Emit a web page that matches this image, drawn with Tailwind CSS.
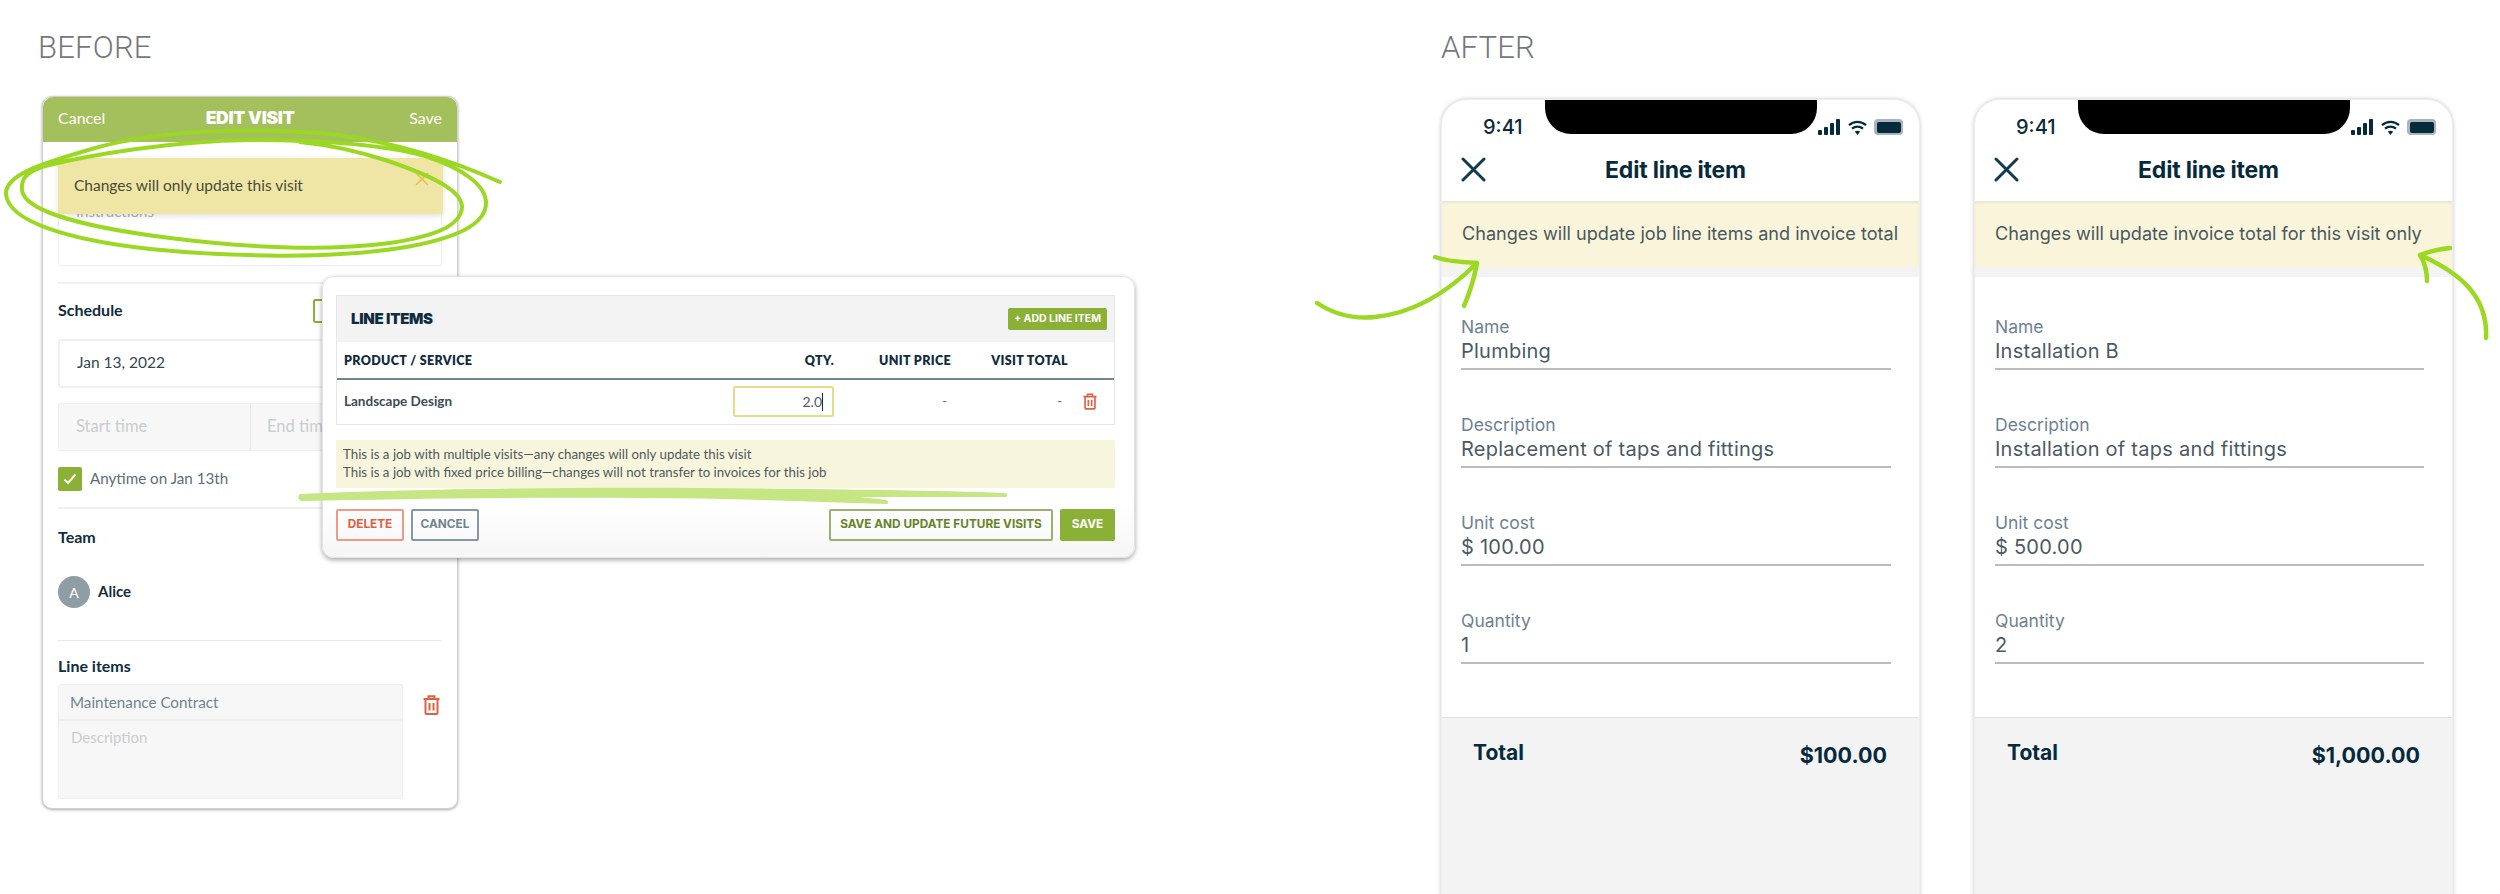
<!DOCTYPE html>
<html lang="en">
<head>
  <meta charset="UTF-8" />
  <meta name="viewport" content="width=device-width, initial-scale=1.0" />
  <title>Before / After</title>
  <script src="https://cdn.jsdelivr.net/npm/@tailwindcss/browser@4"></script>
</head>
<body class="bg-white">
<div class="relative flex w-[2500px] h-[894px] overflow-hidden bg-white font-['Lato',sans-serif]">

  <!-- Before -->
  <section class="relative w-[1441px] shrink-0">
    <h2 class="ml-[38px] mt-[30px] h-[66px] text-[31px] leading-[36px] font-light tracking-[0.2px] text-[#75787b] font-['Roboto',sans-serif]">BEFORE</h2>

    <!-- Edit visit card -->
    <div class="relative ml-[42px] w-[416px] h-[713px] rounded-[10px] bg-white border border-[#d0d0d0] shadow-[0_1px_3px_rgba(0,0,0,0.35)]">
      <div class="flex items-center h-[45px] px-[15px] pb-[3px] rounded-t-[10px] bg-[#a3c05c] text-white text-[16px]">
        <span class="flex-1">Cancel</span>
        <span class="text-[17.5px] font-black font-['Inter',sans-serif] tracking-[-0.3px]">EDIT VISIT</span>
        <span class="flex-1 text-right">Save</span>
      </div>
      <div class="px-[15px]">
        <div class="mt-[17px] h-[107px] pt-[40px] pl-[17px] border border-[#eeeeee] rounded-[2px] text-[15px] text-[#a9b1b6]">Instructions</div>
        <div class="mt-[16px] h-[2px] bg-[#f0f0f0]"></div>

        <div class="mt-[15px] flex items-center justify-between h-[24px]">
          <span class="pb-[2px] text-[16px] font-bold text-[#0f2d3e]">Schedule</span>
          <span class="w-[129px] h-[24px] rounded-[2px] border-2 border-[#8ab036]"></span>
        </div>
        <div class="mt-[16px] flex items-center h-[49px] pl-[17px] pb-[2px] border-2 border-[#f0f0f0] rounded-[3px] text-[15.5px] text-[#33484f]">Jan 13, 2022</div>
        <div class="mt-[15px] flex h-[48px] bg-[#f7f7f7] border border-[#eeeeee] rounded-[2px] text-[16.5px] text-[#c9cdd0]">
          <div class="flex items-center w-[192px] pl-[17px] pb-[2px] border-r border-[#e8e8e8]">Start time</div>
          <div class="flex items-center pl-[16px] pb-[2px]">End time</div>
        </div>
        <div class="mt-[16px] flex items-center gap-[8px] h-[24px]">
          <span class="flex items-center justify-center w-[24px] h-[24px] rounded-[2px] bg-[#8ab036]">
            <svg width="14" height="12" viewBox="0 0 14 12" fill="none" stroke="#fff" stroke-width="2"><path d="M1.5 6.5 5 10l7.5-8.5" /></svg>
          </span>
          <span class="pb-[2px] text-[15.2px] text-[#5d6d77]">Anytime on Jan 13th</span>
        </div>
        <div class="mt-[16px] h-[2px] bg-[#f0f0f0]"></div>

        <div class="mt-[17px] h-[24px] text-[16px] leading-[21px] font-bold text-[#0f2d3e]">Team</div>
        <div class="mt-[26px] flex items-center gap-[8px]">
          <span class="flex items-center justify-center w-[32px] h-[32px] rounded-full bg-[#8f9da5] text-white text-[14px]">A</span>
          <span class="pb-[2px] text-[15px] font-bold text-[#0f2d3e]">Alice</span>
        </div>
        <div class="mt-[32px] h-[1px] bg-[#e8e8e8]"></div>

        <div class="mt-[14px] h-[24px] text-[16px] leading-[21px] font-bold text-[#0f2d3e]">Line items</div>
        <div class="mt-[5px] flex">
          <div class="w-[345px] h-[115px] bg-[#f7f7f7] border border-[#f0f0f0] rounded-[2px]">
            <div class="flex items-center h-[36px] pl-[11px] border-b-2 border-[#f0f0f0] text-[15.2px] text-[#6f8590]">Maintenance Contract</div>
            <div class="pl-[12px] pt-[5px] text-[15px] text-[#c9cdd0]">Description</div>
          </div>
          <svg class="ml-[20px] mt-[11px]" width="17" height="20" viewBox="0 0 17 20" fill="none" stroke="#e2603f" stroke-width="2">
            <path d="M0.5 4h16M5.5 4V1.2h6V4M2.5 4v14a1 1 0 0 0 1 1h10a1 1 0 0 0 1-1V4M6.5 8v7.5M10.5 8v7.5" />
          </svg>
        </div>
      </div>

      <!-- Toast over the instructions field -->
      <div class="absolute left-[15px] top-[61px] flex items-center w-[385px] h-[56px] pl-[16px] bg-[#efe6a6] shadow-[0_2px_6px_rgba(0,0,0,0.12)] text-[15.5px] text-[#4a4a38]">
        Changes will only update this visit
        <svg class="absolute right-[14px] top-[14px]" width="14" height="14" viewBox="0 0 14 14" stroke="#e3c24a" stroke-width="1.5"><path d="M1 1l12 12M13 1 1 13" /></svg>
      </div>
    </div>

    <!-- Line items dialog -->
    <div class="absolute left-[322px] top-[276px] w-[813px] h-[282px] pl-[13px] pr-[19px] pt-[18px] rounded-[12px] border border-[#e4e4e4] bg-gradient-to-b from-white from-80% to-[#f6f6f6] shadow-[0_2px_5px_rgba(0,0,0,0.35)] z-10">
      <div class="w-[779px] h-[130px] border border-[#e6e6e6]">
        <div class="flex items-center justify-between h-[46px] pl-[14px] pr-[7px] bg-[#f3f3f3]">
          <span class="text-[15px] font-black font-['Inter',sans-serif] tracking-[-0.3px] text-[#0f2d3e]">LINE ITEMS</span>
          <span class="flex items-center justify-center w-[99px] h-[22px] rounded-[2px] bg-[#8ab036] text-white text-[10.5px] font-bold font-['Inter',sans-serif]">+ ADD LINE ITEM</span>
        </div>
        <div class="flex items-center h-[38px] pl-[7px] pt-[2px] border-b-2 border-[#6f8590] text-[12.5px] font-extrabold tracking-[0.35px] text-[#0f2d3e]">
          <span class="w-[490px]">PRODUCT / SERVICE</span>
          <span class="w-[0px] flex justify-end whitespace-nowrap">QTY.</span>
          <span class="w-[117px] text-right">UNIT PRICE</span>
          <span class="w-[117px] text-right">VISIT TOTAL</span>
        </div>
        <div class="flex items-center h-[44px] pl-[7px] pb-[1px] text-[#5d6d77]">
          <span class="w-[389px] text-[13.5px] font-bold text-[#3d4c56]">Landscape Design</span>
          <span class="relative flex items-center justify-end w-[101px] h-[31px] pr-[10px] border-2 border-[#e8dc8a] rounded-[2px] text-[14px] text-[#4a5a64]">2.0<span class="absolute right-[9px] top-[5px] w-[1px] h-[18px] bg-[#0f2d3e]"></span></span>
          <span class="w-[113px] text-right text-[13px]">-</span>
          <span class="w-[115px] text-right text-[13px]">-</span>
          <svg class="ml-[21px]" width="14" height="17" viewBox="0 0 17 20" fill="none" stroke="#e2603f" stroke-width="2">
            <path d="M0.5 4h16M5.5 4V1.2h6V4M2.5 4v14a1 1 0 0 0 1 1h10a1 1 0 0 0 1-1V4M6.5 8v7.5M10.5 8v7.5" />
          </svg>
        </div>
      </div>
      <div class="mt-[15px] w-[779px] h-[48px] px-[7px] py-[6px] bg-[#f7f5dc] text-[13.3px] leading-[17.5px] text-[#4e5a60]">
        <p>This is a job with multiple visits—any changes will only update this visit</p>
        <p>This is a job with fixed price billing—changes will not transfer to invoices for this job</p>
      </div>
      <div class="mt-[21px] flex w-[779px] h-[32px] text-[11.8px] font-bold font-['Inter',sans-serif]">
        <span class="flex items-center justify-center w-[68px] border-2 border-[#ee9a86] rounded-[2px] text-[#e2603f]">DELETE</span>
        <span class="ml-[7px] flex items-center justify-center w-[68px] border-2 border-[#8598a5] rounded-[2px] text-[#6f8590]">CANCEL</span>
        <span class="ml-auto flex items-center justify-center w-[224px] border-2 border-[#9ab070] rounded-[2px] text-[#66832a]">SAVE AND UPDATE FUTURE VISITS</span>
        <span class="ml-[7px] flex items-center justify-center w-[55px] rounded-[2px] bg-[#8ab036] text-white">SAVE</span>
      </div>
    </div>
  </section>

  <!-- After -->
  <section class="font-['Inter',sans-serif]">
    <h2 class="mt-[30px] h-[69px] text-[31px] leading-[36px] font-light tracking-[0.2px] text-[#75787b] font-['Roboto',sans-serif]">AFTER</h2>
    <div class="flex gap-[54px]">

      <!-- Phone 1 -->
      <div class="relative flex flex-col w-[479px] h-[800px] rounded-t-[26px] border-x border-t border-[#eeeeee] bg-white shadow-[0_0_4px_rgba(0,0,0,0.22)]">
        <div class="absolute left-[103px] top-0 w-[272px] h-[34px] rounded-b-[26px] bg-black"></div>
        <div class="flex items-center h-[54px] pl-[41px] pr-[16px]">
          <span class="text-[20px] font-medium text-[#0c2a3a]">9:41</span>
          <div class="ml-auto flex items-center gap-[7px]">
            <svg width="23" height="16" viewBox="0 0 23 16" fill="#042a3c"><rect x="0" y="11" width="4" height="5" rx="1" /><rect x="6" y="8" width="4" height="8" rx="1" /><rect x="12" y="4" width="4" height="12" rx="1" /><rect x="18" y="0" width="4" height="16" rx="1" /></svg>
            <svg width="19" height="15" viewBox="0 0 19 15" fill="none" stroke="#042a3c" stroke-width="2.2"><path d="M1 5.2c5-4.4 12-4.4 17 0M4 8.6c3.2-2.7 7.8-2.7 11 0" /><path d="M9.5 15 6.8 11.6c1.6-1.2 3.8-1.2 5.4 0z" fill="#042a3c" stroke="none" /></svg>
            <span class="flex items-center justify-center w-[29px] h-[16px] rounded-[4px] bg-[#a9b5bb]"><span class="w-[24px] h-[11px] rounded-[2px] bg-[#042a3c]"></span></span>
          </div>
        </div>
        <div class="relative flex items-center justify-center h-[47px] pb-[14px] pr-[10px]">
          <svg class="absolute left-[19px] top-[3px]" width="25" height="25" viewBox="0 0 25 25" stroke="#0f3a4f" stroke-width="3" stroke-linecap="round"><path d="M2 2l21 21M23 2 2 23" /></svg>
          <span class="text-[23px] font-bold text-[#042a3c] tracking-[-0.2px]">Edit line item</span>
        </div>
        <div class="flex items-center h-[66px] pl-[20px] bg-[#faf5da] shadow-[inset_0_2px_2px_rgba(0,0,0,0.06)] text-[18.1px] text-[#48585f]">Changes will update job line items and invoice total</div>
        <div class="h-[10px] bg-[#f3f3f3]"></div>
        <div class="pl-[19px] pr-[28px] pt-[38px] h-[440px]">
          <div class="h-[55px] pt-[1px] border-b-2 border-[#bcbcbc]">
            <p class="text-[17.5px] leading-[22px] text-[#6d8290]">Name</p>
            <p class="text-[20px] leading-[26px] tracking-[0.25px] text-[#4a5a64]">Plumbing</p>
          </div>
          <div class="mt-[43px] h-[55px] pt-[1px] border-b-2 border-[#bcbcbc]">
            <p class="text-[17.5px] leading-[22px] text-[#6d8290]">Description</p>
            <p class="text-[20px] leading-[26px] tracking-[0.25px] text-[#4a5a64]">Replacement of taps and fittings</p>
          </div>
          <div class="mt-[43px] h-[55px] pt-[1px] border-b-2 border-[#bcbcbc]">
            <p class="text-[17.5px] leading-[22px] text-[#6d8290]">Unit cost</p>
            <p class="text-[20px] leading-[26px] tracking-[0.25px] text-[#4a5a64]">$ 100.00</p>
          </div>
          <div class="mt-[43px] h-[55px] pt-[1px] border-b-2 border-[#bcbcbc]">
            <p class="text-[17.5px] leading-[22px] text-[#6d8290]">Quantity</p>
            <p class="text-[20px] leading-[26px] tracking-[0.25px] text-[#4a5a64]">1</p>
          </div>
        </div>
        <div class="flex-1 flex justify-between pl-[31px] pr-[32px] pt-[22px] bg-[#f3f3f3] border-t border-[#e0e0e0] text-[#042a3c] font-bold">
          <span class="text-[21px] leading-[26px]">Total</span>
          <span class="text-[21.5px] leading-[30px]">$100.00</span>
        </div>
      </div>

      <!-- Phone 2 -->
      <div class="relative flex flex-col w-[479px] h-[800px] rounded-t-[26px] border-x border-t border-[#eeeeee] bg-white shadow-[0_0_4px_rgba(0,0,0,0.22)]">
        <div class="absolute left-[103px] top-0 w-[272px] h-[34px] rounded-b-[26px] bg-black"></div>
        <div class="flex items-center h-[54px] pl-[41px] pr-[16px]">
          <span class="text-[20px] font-medium text-[#0c2a3a]">9:41</span>
          <div class="ml-auto flex items-center gap-[7px]">
            <svg width="23" height="16" viewBox="0 0 23 16" fill="#042a3c"><rect x="0" y="11" width="4" height="5" rx="1" /><rect x="6" y="8" width="4" height="8" rx="1" /><rect x="12" y="4" width="4" height="12" rx="1" /><rect x="18" y="0" width="4" height="16" rx="1" /></svg>
            <svg width="19" height="15" viewBox="0 0 19 15" fill="none" stroke="#042a3c" stroke-width="2.2"><path d="M1 5.2c5-4.4 12-4.4 17 0M4 8.6c3.2-2.7 7.8-2.7 11 0" /><path d="M9.5 15 6.8 11.6c1.6-1.2 3.8-1.2 5.4 0z" fill="#042a3c" stroke="none" /></svg>
            <span class="flex items-center justify-center w-[29px] h-[16px] rounded-[4px] bg-[#a9b5bb]"><span class="w-[24px] h-[11px] rounded-[2px] bg-[#042a3c]"></span></span>
          </div>
        </div>
        <div class="relative flex items-center justify-center h-[47px] pb-[14px] pr-[10px]">
          <svg class="absolute left-[19px] top-[3px]" width="25" height="25" viewBox="0 0 25 25" stroke="#0f3a4f" stroke-width="3" stroke-linecap="round"><path d="M2 2l21 21M23 2 2 23" /></svg>
          <span class="text-[23px] font-bold text-[#042a3c] tracking-[-0.2px]">Edit line item</span>
        </div>
        <div class="flex items-center h-[66px] pl-[20px] bg-[#faf5da] shadow-[inset_0_2px_2px_rgba(0,0,0,0.06)] text-[18.1px] text-[#48585f]">Changes will update invoice total for this visit only</div>
        <div class="h-[10px] bg-[#f3f3f3]"></div>
        <div class="pl-[20px] pr-[28px] pt-[38px] h-[440px]">
          <div class="h-[55px] pt-[1px] border-b-2 border-[#bcbcbc]">
            <p class="text-[17.5px] leading-[22px] text-[#6d8290]">Name</p>
            <p class="text-[20px] leading-[26px] tracking-[0.25px] text-[#4a5a64]">Installation B</p>
          </div>
          <div class="mt-[43px] h-[55px] pt-[1px] border-b-2 border-[#bcbcbc]">
            <p class="text-[17.5px] leading-[22px] text-[#6d8290]">Description</p>
            <p class="text-[20px] leading-[26px] tracking-[0.25px] text-[#4a5a64]">Installation of taps and fittings</p>
          </div>
          <div class="mt-[43px] h-[55px] pt-[1px] border-b-2 border-[#bcbcbc]">
            <p class="text-[17.5px] leading-[22px] text-[#6d8290]">Unit cost</p>
            <p class="text-[20px] leading-[26px] tracking-[0.25px] text-[#4a5a64]">$ 500.00</p>
          </div>
          <div class="mt-[43px] h-[55px] pt-[1px] border-b-2 border-[#bcbcbc]">
            <p class="text-[17.5px] leading-[22px] text-[#6d8290]">Quantity</p>
            <p class="text-[20px] leading-[26px] tracking-[0.25px] text-[#4a5a64]">2</p>
          </div>
        </div>
        <div class="flex-1 flex justify-between pl-[32px] pr-[32px] pt-[22px] bg-[#f3f3f3] border-t border-[#e0e0e0] text-[#042a3c] font-bold">
          <span class="text-[21px] leading-[26px]">Total</span>
          <span class="text-[21.5px] leading-[30px]">$1,000.00</span>
        </div>
      </div>
    </div>
  </section>

  <!-- Hand-drawn annotations -->
  <svg class="absolute left-0 top-0 z-20 pointer-events-none" width="2500" height="894" viewBox="0 0 2500 894" fill="none" stroke-linecap="round" stroke-linejoin="round">
    <path stroke="#9bd823" stroke-width="4" d="M500 182C450 160 400 143 330 134C250 127 160 130 95 148C40 164 5 175 6 194C8 222 70 240 150 249C230 257 330 259 400 248C450 240 486 226 486 203C486 185 462 168 425 156C385 145 320 140 250 140C170 141 90 155 45 166C25 172 21 180 22 190C24 212 90 228 170 238C250 248 330 251 390 243C435 236 461 226 462 207C462 190 430 175 385 160C360 152 330 145 300 142" />
    <path fill="#c5e683" d="M300 494C420 489 560 487 700 488C810 489 920 490 1005 493C1008 494 1008 497 1005 497C950 497 900 497 860 497C870 498 880 499 886 500C889 501 889 504 886 504C800 501 720 498 640 498C520 497 400 499 303 501C298 501 297 495 300 494Z" />
    <path stroke="#9bd823" stroke-width="4.5" d="M1317 303C1335 315 1355 319 1375 317C1415 313 1450 290 1477 263M1435 257C1448 262 1462 262 1477 263C1474 280 1470 292 1464 306" />
    <path stroke="#9bd823" stroke-width="4.5" d="M2486 338C2488 300 2465 275 2420 255M2450 248C2440 249 2430 251 2420 255C2425 263 2427 272 2427 281" />
  </svg>
</div>
</body>
</html>
